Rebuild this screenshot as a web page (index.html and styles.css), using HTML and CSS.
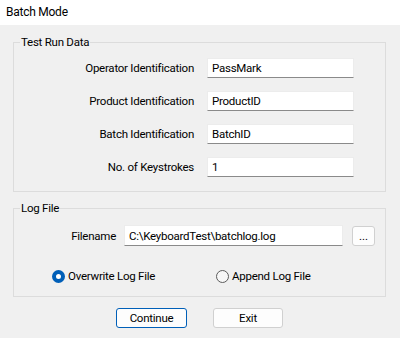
FILE: index.html
```html
<!DOCTYPE html>
<html lang="en">
<head>
    <meta charset="UTF-8">
    <title>Batch Mode</title>
    <link rel="stylesheet" href="styles.css">
</head>
<body>
    <div class="window">
        <div class="titlebar">Batch Mode</div>
        <div class="content">
            <fieldset class="group run-data">
                <legend>Test Run Data</legend>
                <div class="field-row">
                    <label>Operator Identification</label>
                    <input type="text" class="text-box" value="PassMark">
                </div>
                <div class="field-row">
                    <label>Product Identification</label>
                    <input type="text" class="text-box" value="ProductID">
                </div>
                <div class="field-row">
                    <label>Batch Identification</label>
                    <input type="text" class="text-box" value="BatchID">
                </div>
                <div class="field-row">
                    <label>No. of Keystrokes</label>
                    <input type="text" class="text-box" value="1">
                </div>
            </fieldset>

            <fieldset class="group log-file">
                <legend>Log File</legend>
                <div class="file-row">
                    <label>Filename</label>
                    <input type="text" class="text-box filename" value="C:\KeyboardTest\batchlog.log">
                    <button class="browse">...</button>
                </div>
                <div class="radio-row">
                    <label class="radio checked"><span class="dot"></span>Overwrite Log File</label>
                    <label class="radio"><span class="dot"></span>Append Log File</label>
                </div>
            </fieldset>

            <div class="actions">
                <button class="btn default">Continue</button>
                <button class="btn">Exit</button>
            </div>
        </div>
    </div>
</body>
</html>
```

FILE: styles.css
```css
* {
    margin: 0;
    padding: 0;
    box-sizing: border-box;
}

body {
    font-family: Roboto, 'Noto Sans', sans-serif;
    font-size: 11.5px;
    letter-spacing: -0.25px;
    color: #000000;
    background: #f0f0f0;
}

.window {
    width: 400px;
    height: 338px;
    background: #f0f0f0;
}

.titlebar {
    height: 25px;
    line-height: 24px;
    padding-left: 6px;
    font-size: 12px;
    background: #ffffff;
}

.content {
    padding: 10px 14px 0 13px;
}

.group {
    border: 1px solid #dcdcdc;
    padding: 0;
}

.group legend {
    margin-left: 6px;
    padding: 0 1px;
    line-height: 14px;
}

.run-data {
    padding: 9px 0 14px 0;
    display: flex;
    flex-direction: column;
    gap: 13px;
}

.field-row {
    display: flex;
    align-items: center;
    gap: 13px;
}

.field-row label {
    width: 180px;
    text-align: right;
}

.text-box {
    font: inherit;
    letter-spacing: inherit;
    color: #000000;
    height: 20px;
    width: 147px;
    padding: 0 4px;
    background: #ffffff;
    border: 1px solid #ececec;
    border-bottom: 1px solid #8a8a8a;
    outline: none;
}

.log-file {
    margin-top: 9px;
    padding: 10px 0 13px 0;
}

.file-row {
    display: flex;
    align-items: center;
}

.file-row label {
    width: 102px;
    text-align: right;
    margin-right: 8px;
}

.text-box.filename {
    width: 219px;
    height: 21px;
}

.browse {
    margin-left: 9px;
    width: 23px;
    height: 20px;
    font: inherit;
    background: #fdfdfd;
    border: 1px solid #d0d0d0;
    border-radius: 3px;
    line-height: 14px;
}

.radio-row {
    display: flex;
    margin-top: 23px;
    padding-left: 38px;
}

.radio {
    display: flex;
    align-items: center;
    gap: 3px;
    width: 164px;
}

.radio .dot {
    width: 13px;
    height: 13px;
    border-radius: 50%;
    border: 1px solid #5c5c5c;
    background: #f7f7f7;
}

.radio.checked .dot {
    border: 4px solid #005fb8;
    background: #ffffff;
}

.actions {
    display: flex;
    gap: 26px;
    padding-left: 103px;
    margin-top: 11px;
}

.btn {
    font: inherit;
    letter-spacing: inherit;
    width: 70px;
    height: 20px;
    background: #fdfdfd;
    border: 1px solid #d0d0d0;
    border-radius: 3px;
}

.btn.default {
    width: 71px;
    border-color: #005fb8;
}
```
